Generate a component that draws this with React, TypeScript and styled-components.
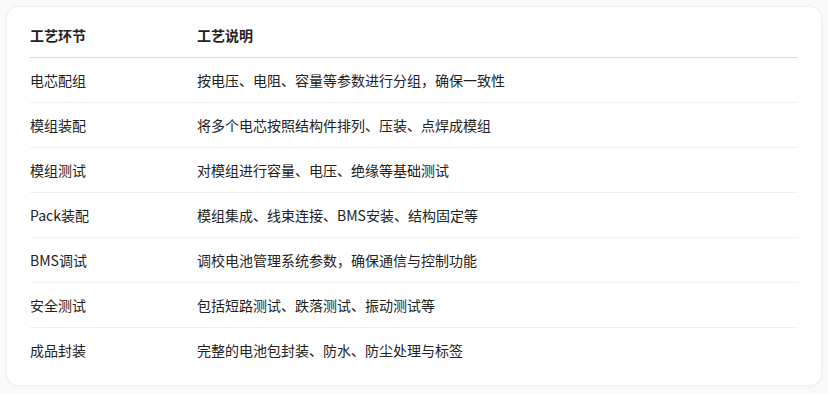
import React from "react";
import styled, { createGlobalStyle } from "styled-components";

const Global = createGlobalStyle`
  html, body { margin: 0; padding: 0; background: #fafafa; }
  body { font-family: "Noto Sans CJK SC", "Noto Sans", sans-serif; }
`;

const Page = styled.div`
  padding: 6px;
  width: 828px;
  box-sizing: border-box;
`;

const Card = styled.div`
  background: #ffffff;
  border: 1px solid #efefef;
  border-radius: 12px;
  box-shadow: 0 1px 4px rgba(0, 0, 0, 0.04);
  padding: 6px 23px 13px;
  height: 380px;
  box-sizing: border-box;
`;

const Table = styled.table`
  width: 100%;
  border-collapse: collapse;
  font-size: 14px;
  color: #222;
`;

const Th = styled.th<{ $w?: number }>`
  text-align: left;
  font-weight: 700;
  height: 44px;
  padding: 0;
  border-bottom: 1px solid #dcdcdc;
  ${(p) => (p.$w ? `width: ${p.$w}px;` : "")}
`;

const Td = styled.td<{ $last?: boolean }>`
  height: 44px;
  padding: 0;
  border-bottom: ${(p) => (p.$last ? "none" : "1px solid #f0f0f0")};
`;

const rows: [string, string][] = [
  ["电芯配组", "按电压、电阻、容量等参数进行分组，确保一致性"],
  ["模组装配", "将多个电芯按照结构件排列、压装、点焊成模组"],
  ["模组测试", "对模组进行容量、电压、绝缘等基础测试"],
  ["Pack装配", "模组集成、线束连接、BMS安装、结构固定等"],
  ["BMS调试", "调校电池管理系统参数，确保通信与控制功能"],
  ["安全测试", "包括短路测试、跌落测试、振动测试等"],
  ["成品封装", "完整的电池包封装、防水、防尘处理与标签"],
];

export default function App() {
  return (
    <Page>
      <Global />
      <Card>
        <Table>
          <thead>
            <tr>
              <Th $w={167}>工艺环节</Th>
              <Th>工艺说明</Th>
            </tr>
          </thead>
          <tbody>
            {rows.map(([a, b], i) => (
              <tr key={a}>
                <Td $last={i === rows.length - 1}>{a}</Td>
                <Td $last={i === rows.length - 1}>{b}</Td>
              </tr>
            ))}
          </tbody>
        </Table>
      </Card>
    </Page>
  );
}
